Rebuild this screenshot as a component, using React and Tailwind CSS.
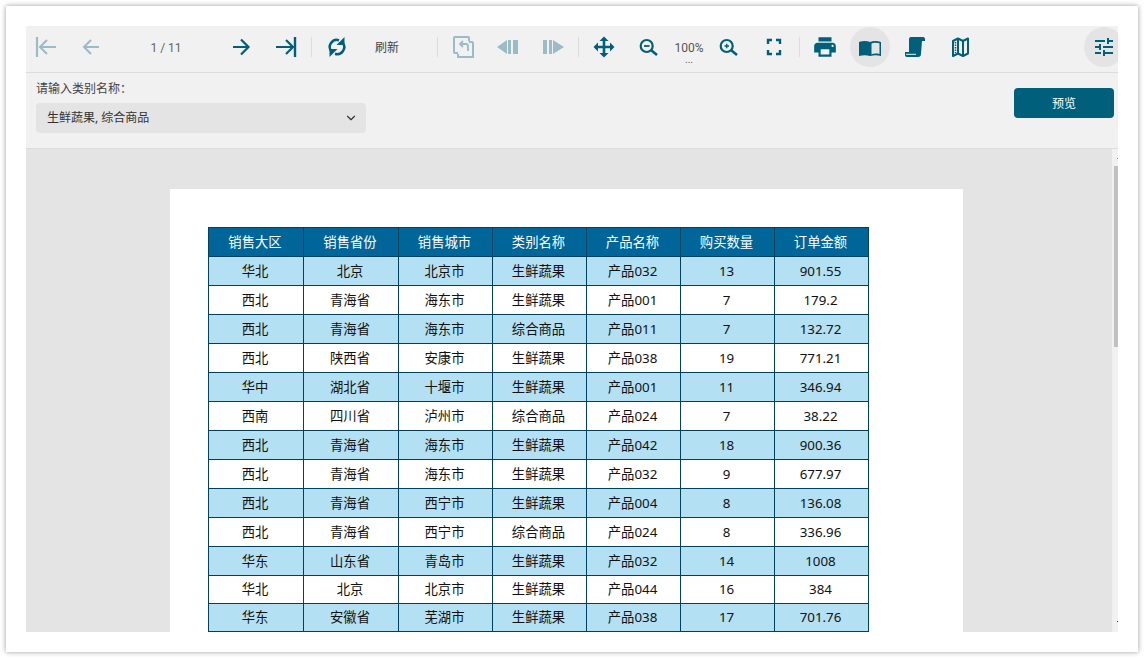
import React from "react";
import { ChevronDown } from "lucide-react";
import { MdPrint, MdTune } from "react-icons/md";

const font = { fontFamily: '"Noto Sans", "Noto Sans CJK SC", sans-serif' };

const headers = ["销售大区", "销售省份", "销售城市", "类别名称", "产品名称", "购买数量", "订单金额"];

const rows = [
  ["华北", "北京", "北京市", "生鲜蔬果", "产品032", "13", "901.55"],
  ["西北", "青海省", "海东市", "生鲜蔬果", "产品001", "7", "179.2"],
  ["西北", "青海省", "海东市", "综合商品", "产品011", "7", "132.72"],
  ["西北", "陕西省", "安康市", "生鲜蔬果", "产品038", "19", "771.21"],
  ["华中", "湖北省", "十堰市", "生鲜蔬果", "产品001", "11", "346.94"],
  ["西南", "四川省", "泸州市", "综合商品", "产品024", "7", "38.22"],
  ["西北", "青海省", "海东市", "生鲜蔬果", "产品042", "18", "900.36"],
  ["西北", "青海省", "海东市", "生鲜蔬果", "产品032", "9", "677.97"],
  ["西北", "青海省", "西宁市", "生鲜蔬果", "产品004", "8", "136.08"],
  ["西北", "青海省", "西宁市", "综合商品", "产品024", "8", "336.96"],
  ["华东", "山东省", "青岛市", "生鲜蔬果", "产品032", "14", "1008"],
  ["华北", "北京", "北京市", "生鲜蔬果", "产品044", "16", "384"],
  ["华东", "安徽省", "芜湖市", "生鲜蔬果", "产品038", "17", "701.76"],
  // next row is cut off by the viewer, only the border stubs show
  ["", "", "", "", "", "", ""],
];

const Icon = ({ children, off }) => (
  <svg
    viewBox="0 0 40 40"
    className={off ? "w-10 h-10 text-[#9bbcc7]" : "w-10 h-10 text-[#005f7a]"}
    fill="none"
    stroke="currentColor"
    strokeWidth="2"
  >
    {children}
  </svg>
);

const Btn = ({ children, active }) => (
  <div className={active ? "w-10 h-10 shrink-0 rounded-full bg-[#e4e4e4] flex items-center justify-center" : "w-10 h-10 shrink-0 flex items-center justify-center"}>
    {children}
  </div>
);

const Sep = () => <div className="w-px h-5 mt-[10px] shrink-0 bg-[#dcdcdc]" />;

const Toolbar = () => (
  <div className="h-[47px] shrink-0 flex items-start gap-[5px] pt-px border-b border-[#dcdcdc] bg-[#f1f1f1]">
    <Btn>
      <Icon off>
        <path d="M11 10v20" strokeWidth="2.2" />
        <path d="M30 20H14M21 13l-7 7 7 7" />
      </Icon>
    </Btn>
    <Btn>
      <Icon off>
        <path d="M28 20H13M20 13l-7 7 7 7" />
      </Icon>
    </Btn>
    <div className="w-[100px] h-10 shrink-0 flex items-center justify-center pt-0.5 text-xs text-[#666] font-['Roboto']">1 / 11</div>
    <Btn>
      <Icon>
        <path d="M12 20h15M20 12.5l7.5 7.5-7.5 7.5" strokeWidth="2.2" />
      </Icon>
    </Btn>
    <Btn>
      <Icon>
        <path d="M29 10v20" strokeWidth="2.4" />
        <path d="M10 20h17M20 13l7 7-7 7" strokeWidth="2.2" />
      </Icon>
    </Btn>
    <Sep />
    <Btn>
      <Icon>
        <path d="M14.500 24.500A7 7 0 0 1 22 13.300" strokeWidth="2.500" />
        <path d="M25.500 15.500A7 7 0 0 1 18 26.700" strokeWidth="2.500" />
        <path d="M27.500 10v8h-8z" fill="currentColor" stroke="none" />
        <path d="M12.500 30v-8h8z" fill="currentColor" stroke="none" />
      </Icon>
    </Btn>
    <div className="w-[50px] mr-5 h-10 shrink-0 flex items-center justify-center pt-0.5 text-xs text-[#444]">刷新</div>
    <Sep />
    <Btn>
      <Icon off>
        <path d="M15 26h-3a1 1 0 0 1-1-1V11a1 1 0 0 1 1-1h13a1 1 0 0 1 1 1v3" />
        <path d="M26 15h3a1 1 0 0 1 1 1v14H15v-3" />
        <path d="M25 24v-5a2 2 0 0 0-2-2h-6M20 14l-3 3 3 3" strokeWidth="1.800" />
      </Icon>
    </Btn>
    <Btn>
      <Icon off>
        <path d="M9 20l10-7v14z" fill="currentColor" stroke="none" />
        <path d="M20 13h3v14h-3zM25 13h5v14h-5z" fill="currentColor" stroke="none" />
      </Icon>
    </Btn>
    <Btn>
      <Icon off>
        <path d="M10 13h4v14h-4zM16 13h3v14h-3z" fill="currentColor" stroke="none" />
        <path d="M20 13l11 7-11 7z" fill="currentColor" stroke="none" />
      </Icon>
    </Btn>
    <Sep />
    <Btn>
      <Icon>
        <path d="M20 11v18M11 20h18" strokeWidth="2.600" />
        <path d="M20 9.500l4.500 4.500h-9zM20 30.500l4.500-4.500h-9zM9.500 20l4.500-4.500v9zM30.500 20L26 15.500v9z" fill="currentColor" stroke="none" />
      </Icon>
    </Btn>
    <Btn>
      <Icon>
        <circle cx="17.700" cy="19" r="6" strokeWidth="2.200" />
        <path d="M15 19h5.500" strokeWidth="1.800" />
        <path d="M22.500 23.500l5.500 4.500" strokeWidth="2.600" />
      </Icon>
    </Btn>
    <div className="w-[30px] h-10 shrink-0 relative flex items-center justify-center pt-0.5 text-xs text-[#555] font-['Roboto']">
      100%
      <span className="absolute left-0 right-0 top-[28px] text-center text-[10px] leading-[10px]">...</span>
    </div>
    <Btn>
      <Icon>
        <circle cx="17.700" cy="19" r="6" strokeWidth="2.200" />
        <path d="M15.500 19h4.500M17.700 16.700v4.600" strokeWidth="1.400" />
        <path d="M22.500 23.500l5.500 4.500" strokeWidth="2.600" />
      </Icon>
    </Btn>
    <Btn>
      <Icon>
        <path d="M14 17v-4h4M22 13h4v4M26 23v4h-4M18 27h-4v-4" strokeWidth="2.400" />
      </Icon>
    </Btn>
    <Sep />
    <Btn>
      <MdPrint className="w-[26px] h-[26px] text-[#005f7a]" />
    </Btn>
    <Btn active>
      <Icon>
        <path d="M9 15c3.500-1.500 8-1.500 11 0 3-1.500 7.500-1.500 11 0v14c-3.500-1-7.500-1-11 0-3-1-7.500-1-11 0z" fill="currentColor" stroke="none" />
        <path d="M21.500 16.500c2-1 5-1 8-.3v10.800c-3-.6-6-.5-8 .3z" fill="#e4e4e4" stroke="none" />
      </Icon>
    </Btn>
    <Btn>
      <Icon>
        <path d="M14 25V12a2 2 0 0 1 2-2h12c1.500 0 2 1 2 2v2h-3l-1 13c-.1 2-1 3-3 3H12c-1.500 0-2-1-2-2v-3z" fill="currentColor" stroke="none" />
        <path d="M11 27.300h10" stroke="#f1f1f1" strokeWidth="1" />
      </Icon>
    </Btn>
    <Btn>
      <Icon>
        <path d="M13 14l5-2.500 5 2.500 5-2.500v15l-5 2.500-5-2.500-5 2.500z" strokeWidth="2" strokeLinejoin="round" />
        <path d="M18 12v15M23 14v15" strokeWidth="2" />
        <path d="M15.500 15v11" strokeWidth="1.500" strokeDasharray="1.500 1" />
      </Icon>
    </Btn>
    <div className="ml-auto -mr-[6px]">
      <Btn active>
        <MdTune className="w-6 h-6 text-[#005f7a]" />
      </Btn>
    </div>
  </div>
);

const Params = () => (
  <div className="h-[76px] shrink-0 flex justify-between pl-[10px] pr-1 pt-2 border-b border-[#dcdcdc] bg-[#f1f1f1]">
    <div className="w-[330px]">
      <div className="text-xs leading-[16px] text-[#444]">请输入类别名称：</div>
      <div className="mt-1.5 h-[30px] rounded-sm bg-[#e4e4e4] flex items-center justify-between pl-[11px] pr-2 text-xs text-[#333]">
        <span>生鲜蔬果, 综合商品</span>
        <ChevronDown className="w-[14px] h-[14px] text-[#333]" />
      </div>
    </div>
    <div className="w-[100px] h-[30px] mt-[7px] pt-0.5 rounded-sm bg-[#00607c] flex items-center justify-center text-xs text-white">预览</div>
  </div>
);

const ReportTable = () => (
  <table className="table-fixed border-collapse w-[661px] text-[13.33px] text-[#111]">
    <colgroup>
      <col className="w-[95px]" />
      <col className="w-[95px]" />
      <col className="w-[94px]" />
      <col className="w-[94px]" />
      <col className="w-[94px]" />
      <col className="w-[94px]" />
      <col className="w-[94px]" />
    </colgroup>
    <thead>
      <tr className="h-[29px] bg-[#006699] text-white">
        {headers.map((h) => (
          <th key={h} className="border border-[#00415f] font-normal p-0 pt-px pr-0.5">
            {h}
          </th>
        ))}
      </tr>
    </thead>
    <tbody>
      {rows.map((row, i) => (
        <tr key={i} className={(i % 2 === 0 ? "bg-[#b4e0f3] " : "bg-white ") + (i < 11 ? "h-[29px]" : "h-[28px]")}>
          {row.map((cell, j) => (
            <td key={j} className="border border-[#00415f] text-center p-0 pt-px pr-0.5">
              {cell}
            </td>
          ))}
        </tr>
      ))}
    </tbody>
  </table>
);

export default function App() {
  return (
    <div className="h-[658px] bg-white p-[6px]" style={font}>
      <div className="h-[646px] p-5 bg-white shadow-[0_0_5px_rgba(0,0,0,0.4)]">
        <div className="h-[606px] flex flex-col overflow-hidden">
          <Toolbar />
          <Params />
          <div className="flex-1 min-h-0 flex bg-[#e4e4e4]">
            <div className="flex-1 overflow-hidden pl-[144px] pt-10">
              <div className="w-[793px] h-[600px] bg-white pl-[38px] pt-[38px]">
                <ReportTable />
              </div>
            </div>
            <div className="w-[6px] bg-[#f1f1f1] pl-[2px] pt-[9px] flex flex-col">
              <div className="h-px w-px ml-[3px] bg-[#888]" />
              <div className="h-[181px] mt-[7px] bg-[#c1c1c1]" />
              <div className="h-px w-px ml-[3px] mt-auto mb-[10px] bg-[#333]" />
            </div>
          </div>
        </div>
      </div>
    </div>
  );
}
